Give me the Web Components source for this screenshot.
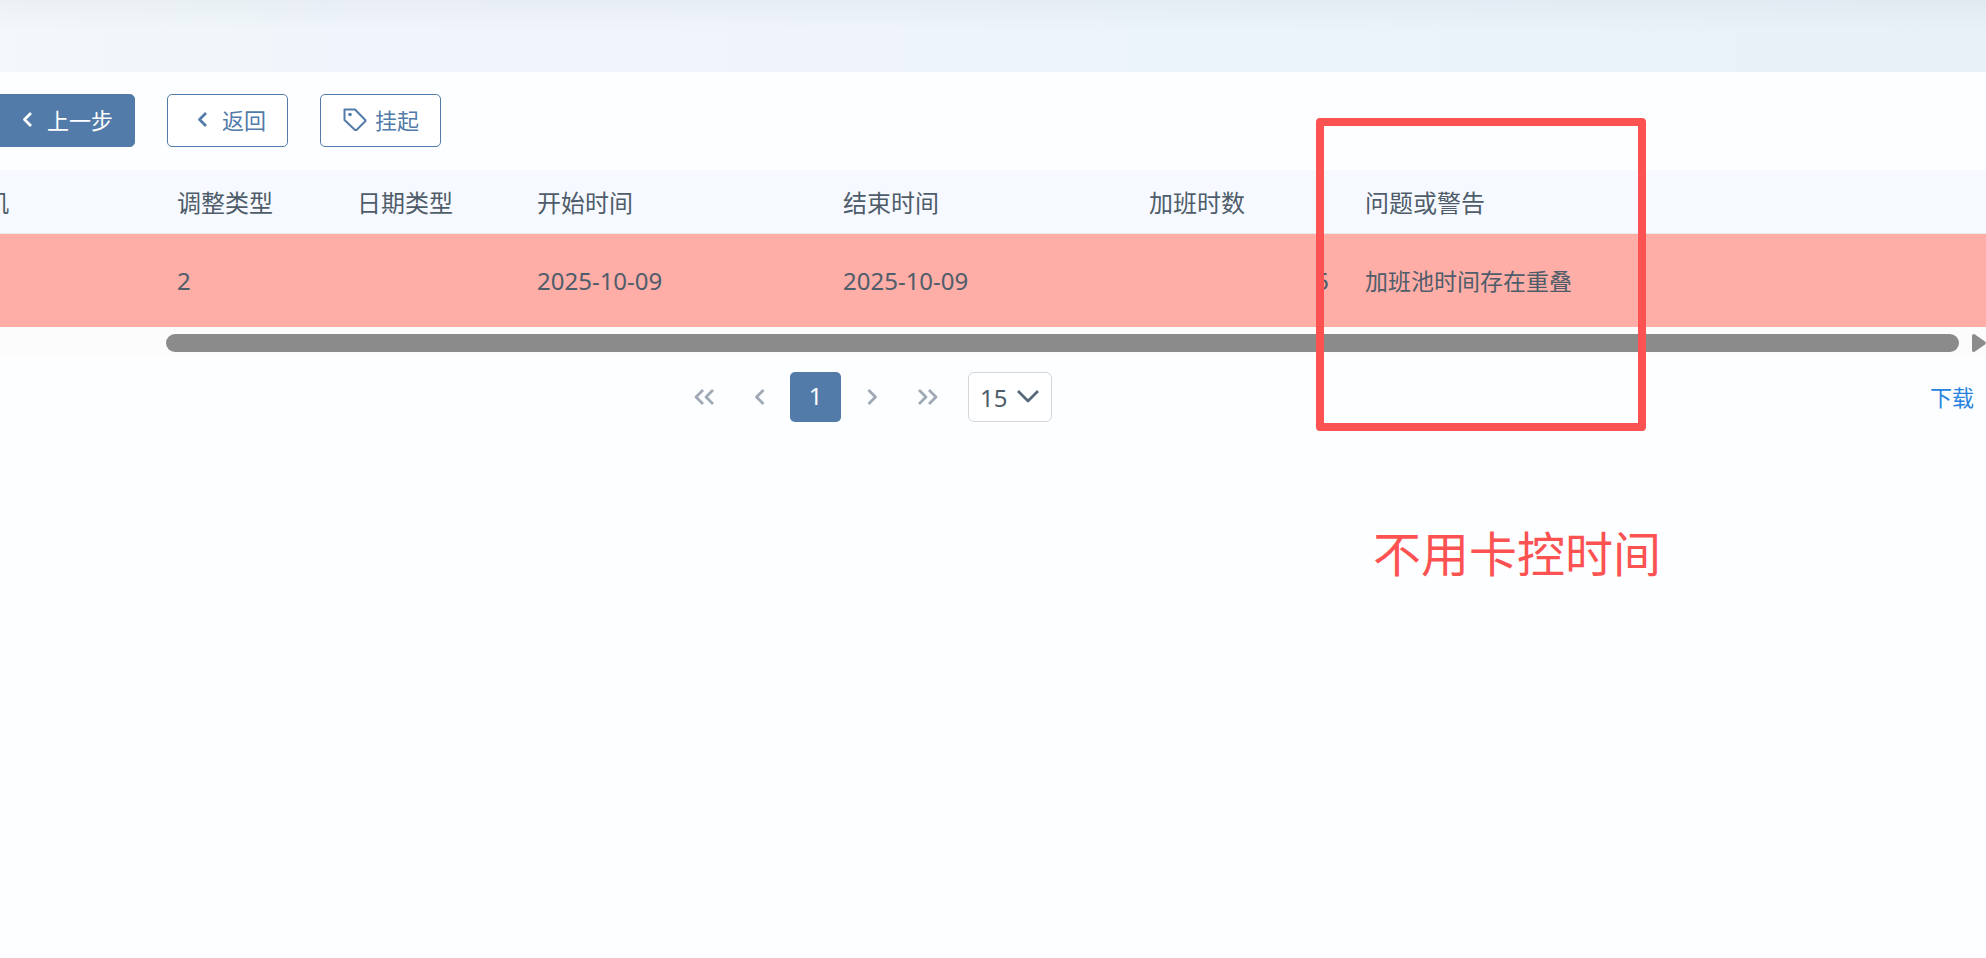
<!DOCTYPE html>
<html lang="zh-CN">
<head>
<meta charset="utf-8">
<title>加班池</title>
<style>
html, body { margin: 0; min-height: 100vh; background: #fdfeff; }
body {
  font-family: "Noto Sans", "Noto Sans CJK SC", sans-serif;
  font-size: 24px; line-height: 32px; color: #4f5d6a; overflow: hidden;
}
</style>
</head>
<body>
<overtime-page></overtime-page>
<script>
const define = (name, html, setup) => {
  const template = document.createElement('template');
  template.innerHTML = html;
  customElements.define(name, class extends HTMLElement {
    constructor() {
      super();
      this.attachShadow({ mode: 'open' }).append(template.content.cloneNode(true));
    }
    connectedCallback() { if (setup) setup(this, this.shadowRoot); }
  });
};

const ICONS = {
  left: '<path d="M16 5 9.500 11.500 16 18" stroke-width="2.800"/>',
  tag: '<path d="M1.500 1.500H12L22.500 12.200V13L13.500 22H12L1.500 12Z" stroke-width="2"/><circle cx="7" cy="6.500" r="1.800" fill="currentColor" stroke="none"/>',
  first: '<path d="M11 5 4 12 11 19M21 5 14 12 21 19" stroke-width="2.800"/>',
  prev: '<path d="M15.500 5 8.500 12 15.500 19" stroke-width="2.800"/>',
  next: '<path d="M8.500 5 15.500 12 8.500 19" stroke-width="2.800"/>',
  last: '<path d="M3 5 10 12 3 19M13 5 20 12 13 19" stroke-width="2.800"/>',
  down: '<path d="M2 7 12 17 22 7" stroke-width="2.800"/>'
};

define('ui-icon', `
<style>
:host { display: block; flex: none; width: 24px; height: 24px; }
svg { display: block; width: 100%; height: 100%; fill: none; stroke: currentColor; stroke-linejoin: round; }
</style>
<svg viewBox="0 0 24 24" aria-hidden="true"></svg>`,
(host, root) => { root.querySelector('svg').innerHTML = ICONS[host.getAttribute('name')]; });

define('top-banner', `
<style>
:host {
  display: block; height: 72px;
  background:
    linear-gradient(rgba(90,105,120,.05), rgba(90,105,120,0) 30px),
    linear-gradient(90deg, #f4f7fb 0, #f0f6f9 12%, #f0f4fd 18%, #eff4fc 45%, #ebf3fb 60%, #e8f0f8 100%);
}
</style>`);

define('tool-button', `
<style>
:host { display: block; flex: none; }
button {
  display: flex; align-items: center; gap: 8px; height: 53px; padding: 0 21px 2px 22px;
  border: 1px solid #527ba9; border-radius: 5px; background: #fff; color: #527ba9;
  font: inherit; font-size: 22px; line-height: 32px; white-space: nowrap;
}
:host([primary]) button { background: #527ba9; color: #fff; }
</style>
<button type="button"><ui-icon></ui-icon><slot></slot></button>`,
(host, root) => {
  const icon = document.createElement('ui-icon');
  icon.setAttribute('name', host.getAttribute('icon'));
  root.querySelector('ui-icon').replaceWith(icon);
});

define('tool-bar', `
<style>
:host { display: flex; gap: 32px; margin-left: -8px; padding: 22px 0 23px; }
</style>
<slot></slot>`);

define('overtime-table', `
<style>
:host { display: block; margin-left: -256px; }
table { width: 100%; table-layout: fixed; border-collapse: separate; border-spacing: 0; }
th, td { box-sizing: border-box; padding: 0 18px; text-align: left; font-weight: 400; white-space: nowrap; }
th { height: 64px; padding-top: 2px; background: #f6f9ff; border-bottom: 1px solid #e7ebef; }
td { height: 93px; background: #ffada7; }
.number { text-align: right; }
.zh { font-size: 23px; }
</style>
<table>
  <colgroup>
    <col style="width:223px"><col style="width:192px"><col style="width:180px"><col style="width:180px">
    <col style="width:306px"><col style="width:306px"><col style="width:216px"><col>
  </colgroup>
  <thead><tr><th></th><th>机</th><th>调整类型</th><th>日期类型</th><th>开始时间</th><th>结束时间</th><th>加班时数</th><th>问题或警告</th></tr></thead>
  <tbody><tr><td></td><td></td><td>2</td><td></td><td>2025-10-09</td><td>2025-10-09</td><td class="number">5</td><td class="zh">加班池时间存在重叠</td></tr></tbody>
</table>`);

define('scroll-strip', `
<style>
:host { display: flex; align-items: center; gap: 13px; height: 31px; padding-left: 166px; background: #fcfcfc; }
.thumb { flex: 1; height: 18px; border-radius: 9px; background: #8b8b8b; }
svg { flex: none; width: 14px; height: 18px; fill: #8b8b8b; }
</style>
<div class="thumb"></div>
<svg viewBox="0 0 14 18" aria-hidden="true"><path d="M0 1.500Q0 0 2 0L3 .500 13 7.500Q14.500 9 13 10.500L3 17.500 2 18Q0 18 0 16.500Z"/></svg>`);

define('page-nav', `
<style>
:host {
  display: grid; grid-template-columns: 1fr auto 1fr; align-items: center;
  margin-left: -256px; padding: 14px 12px;
}
nav { grid-column: 2; display: flex; gap: 5px; }
button {
  display: grid; place-items: center; width: 51px; height: 50px; padding: 0; border: 0;
  border-radius: 5px; background: none; color: #9ea9b5; font: inherit;
}
button[aria-current] { padding-bottom: 2px; background: #527ba9; color: #fff; }
.size { position: relative; margin-left: 10px; color: #566879; }
select {
  appearance: none; display: block; width: 84px; height: 50px; padding: 1px 0 0 11px;
  border: 1px solid #d3d7dc; border-radius: 6px; background: #fff; color: #4f5d6a; font: inherit;
}
.size ui-icon { position: absolute; right: 12px; top: 12px; pointer-events: none; }
a { justify-self: end; padding-bottom: 1px; color: #2783de; font-size: 22px; text-decoration: none; }
</style>
<nav aria-label="分页">
  <button type="button" aria-label="首页"><ui-icon name="first"></ui-icon></button>
  <button type="button" aria-label="上一页"><ui-icon name="prev"></ui-icon></button>
  <button type="button" aria-current="page">1</button>
  <button type="button" aria-label="下一页"><ui-icon name="next"></ui-icon></button>
  <button type="button" aria-label="末页"><ui-icon name="last"></ui-icon></button>
  <div class="size"><select aria-label="每页条数"><option>15</option></select><ui-icon name="down"></ui-icon></div>
</nav>
<a href="#">下载</a>`);

define('mark-up', `
<style>
:host { position: absolute; left: 1316px; top: 118px; color: #fc5352; pointer-events: none; }
.frame { box-sizing: border-box; width: 330px; height: 313px; border: 8px solid; border-radius: 4px; }
p { margin: 91px 0 0 57px; font-size: 48px; line-height: 64px; white-space: nowrap; }
</style>
<div class="frame"></div>
<p><slot></slot></p>`);

define('overtime-page', `
<style>
:host { display: block; position: relative; overflow: hidden; min-height: 100vh; }
</style>
<top-banner></top-banner>
<tool-bar>
  <tool-button primary icon="left">上一步</tool-button>
  <tool-button icon="left">返回</tool-button>
  <tool-button icon="tag">挂起</tool-button>
</tool-bar>
<overtime-table></overtime-table>
<scroll-strip></scroll-strip>
<page-nav></page-nav>
<mark-up>不用卡控时间</mark-up>`);
</script>
</body>
</html>
